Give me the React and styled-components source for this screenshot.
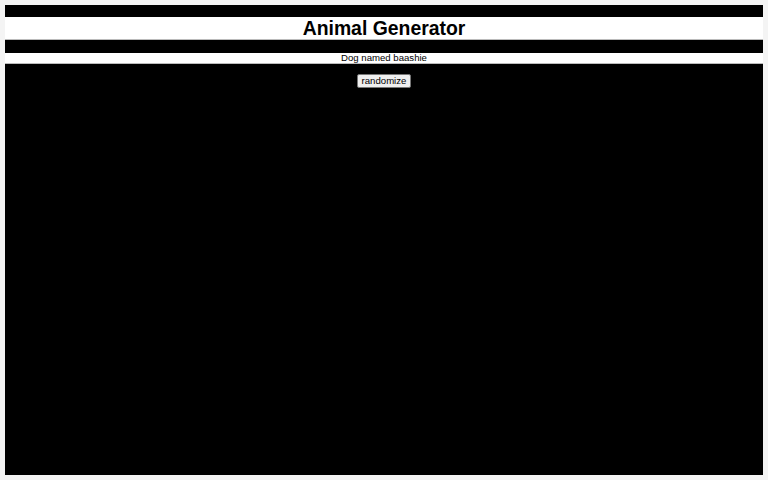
import React from "react";
import styled, { createGlobalStyle } from "styled-components";

const Global = createGlobalStyle`
  html, body { margin: 0; padding: 0; }
  body {
    background: #f4f4f4;
    padding: 5px;
    font-family: "Liberation Sans", Arial, sans-serif;
  }
`;

const Stage = styled.div`
  background: #000;
  height: 470px;
  padding-top: 12px;
  box-sizing: border-box;
  display: flex;
  flex-direction: column;
  align-items: stretch;
`;

const Title = styled.h1`
  margin: 0;
  background: #fff;
  color: #000;
  font-size: 19.4px;
  font-weight: bold;
  line-height: 22px;
  height: 22px;
  text-align: center;
  border-bottom: 1px solid #bbb;
`;

const Caption = styled.p`
  margin: 13px 0 0;
  background: #fff;
  color: #000;
  font-size: 9.6px;
  line-height: 10px;
  height: 10px;
  text-align: center;
  border-bottom: 1px solid #bbb;
`;

const ButtonRow = styled.div`
  display: flex;
  justify-content: center;
  margin-top: 10px;
`;

const Button = styled.button`
  font-family: "Liberation Sans", Arial, sans-serif;
  font-size: 9.6px;
  line-height: 12px;
  height: 14px;
  padding: 0 4px;
  background: #efefef;
  color: #000;
  border: 1px solid #767676;
  border-radius: 2px;
`;

export default function App() {
  return (
    <>
      <Global />
      <Stage>
        <Title>Animal Generator</Title>
        <Caption>Dog named baashie</Caption>
        <ButtonRow>
          <Button>randomize</Button>
        </ButtonRow>
      </Stage>
    </>
  );
}
